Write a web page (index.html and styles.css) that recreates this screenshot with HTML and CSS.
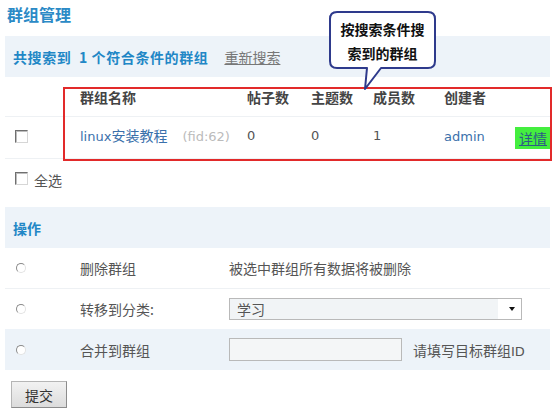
FILE: index.html
```html
<!DOCTYPE html>
<html lang="zh-CN">
<head>
<meta charset="utf-8">
<title>群组管理</title>
<link rel="stylesheet" href="styles.css">
</head>
<body>
<div class="title">群组管理</div>
<div class="wrap">
  <div class="band search">
    <span class="hl">共搜索到&nbsp;&nbsp;1 个符合条件的群组</span>
    <a class="resrch" href="#">重新搜索</a>
  </div>
  <div class="grid head">
    <span></span>
    <span>群组名称</span>
    <span>帖子数</span>
    <span>主题数</span>
    <span>成员数</span>
    <span>创建者</span>
    <span></span>
  </div>
  <div class="grid data">
    <span class="cbcell"><input type="checkbox" class="cb"></span>
    <span><a class="lnk" href="#"><span class="en">linux</span>安装教程</a><span class="fid en">(fid:62)</span></span>
    <span class="en">0</span>
    <span class="en">0</span>
    <span class="en">1</span>
    <span><a class="lnk en" href="#">admin</a></span>
    <span class="detcell"><a class="detail" href="#">详情</a></span>
  </div>
  <div class="selall"><input type="checkbox" class="cb"><span class="sellabel">全选</span></div>
  <div class="band ops">操作</div>
  <div class="op line">
    <span class="rc"><input type="radio" name="op" class="rd"></span>
    <span>删除群组</span>
    <span>被选中群组所有数据将被删除</span>
  </div>
  <div class="op short">
    <span class="rc"><input type="radio" name="op" class="rd"></span>
    <span>转移到分类:</span>
    <span class="selwrap"><select class="sel"><option>学习</option></select><span class="arrow"></span></span>
  </div>
  <div class="op alt">
    <span class="rc"><input type="radio" name="op" class="rd"></span>
    <span>合并到群组</span>
    <span class="mergecell"><input type="text" class="txt"><span class="hint">请填写目标群组<span class="en">ID</span></span></span>
  </div>
</div>
<div class="btnrow"><button class="btn" type="button">提交</button></div>

<div class="redbox"></div>
<div class="callout">
  <svg class="bubble" width="110" height="82" viewBox="0 0 110 82">
    <path d="M9 2 H100 Q107 2 107 9 V51 Q107 58 100 58 H53 L37 79 L39 58 H9 Q2 58 2 51 V9 Q2 2 9 2 Z" fill="#ffffff" stroke="#2e3a8c" stroke-width="2" stroke-linejoin="round"/>
  </svg>
  <div class="ctext">按搜索条件搜<br>索到的群组</div>
</div>
</body>
</html>
```

FILE: styles.css
```css
* { box-sizing: border-box; }

body {
  margin: 0;
  width: 554px;
  height: 409px;
  overflow: hidden;
  position: relative;
  background: #ffffff;
  font-family: "Noto Sans CJK SC", "DejaVu Sans", sans-serif;
  font-size: 14px;
  color: #555555;
}

.en { font-family: "DejaVu Sans", "Noto Sans CJK SC", sans-serif; font-size: 13px; }

.title {
  height: 36px;
  line-height: 28px;
  padding-left: 7px;
  font-size: 16px;
  font-weight: bold;
  color: #2b8ac6;
}

.wrap { margin: 0 4px 0 5px; }

.band {
  height: 41px;
  display: flex;
  align-items: center;
  padding-left: 8px;
  background: #edf3f9;
  color: #2287c6;
  font-weight: bold;
}

.search .hl { letter-spacing: 0.6px; }

.resrch {
  margin-left: 16px;
  font-weight: normal;
  color: #777777;
  text-decoration: underline;
}

.grid {
  display: grid;
  grid-template-columns: 75px 167px 64px 62px 71px 71px 1fr;
  align-items: center;
  border-bottom: 1px solid #eef1f4;
}

.head { height: 40px; font-weight: bold; color: #444444; }
.data { height: 42px; color: #555555; line-height: 20px; padding-bottom: 3px; }

.cbcell { padding-left: 10px; display: flex; align-items: center; }

.cb {
  -webkit-appearance: none;
  appearance: none;
  width: 13px;
  height: 13px;
  margin: 0;
  background: #ffffff;
  border: 1px solid;
  border-color: #6f6f6f #d6d6d6 #d6d6d6 #6f6f6f;
  box-shadow: inset 1px 1px 0 #bdbdbd;
}

.lnk { color: #3a70ab; text-decoration: none; }
.fid { color: #bbbbbb; margin-left: 15px; }

.detcell { white-space: nowrap; overflow: visible; }
.detail {
  display: inline-block;
  white-space: nowrap;
  background: #44ee3f;
  color: #2d5a86;
  text-decoration: underline;
  padding: 0 4px;
  line-height: 22px;
  margin-top: 3px;
}

.selall {
  height: 48px;
  display: flex;
  align-items: flex-start;
  padding: 13px 0 0 10px;
}
.sellabel { margin-left: 6px; line-height: 17px; }

.op {
  display: grid;
  grid-template-columns: 75px 149px 1fr;
  align-items: center;
  height: 41px;
}
.op.line { border-bottom: 1px solid #eef1f4; }
.op.short { height: 40px; }
.op.alt { background: #edf3f9; }

.rc { padding-left: 11px; display: flex; align-items: center; }

.rd {
  -webkit-appearance: none;
  appearance: none;
  width: 10px;
  height: 10px;
  margin: 0;
  border-radius: 50%;
  border: 1px solid;
  border-color: #8a8a8a #e2e2e2 #e2e2e2 #8a8a8a;
  background: #ffffff;
}

.selwrap { position: relative; display: block; width: 293px; height: 22px; }
.sel {
  -webkit-appearance: none;
  appearance: none;
  width: 293px;
  height: 22px;
  margin: 0;
  padding: 0 0 0 7px;
  border: 1px solid #b9b9b9;
  border-radius: 0;
  background: linear-gradient(to right, #f1f4f6 0%, #f1f4f6 92%, #ffffff 92%);
  font-family: "Noto Sans CJK SC", sans-serif;
  font-size: 14px;
  color: #555555;
}
.arrow {
  position: absolute;
  right: 7px;
  top: 9px;
  width: 0;
  height: 0;
  border-left: 3px solid transparent;
  border-right: 3px solid transparent;
  border-top: 4px solid #111111;
}

.mergecell { display: flex; align-items: center; }
.txt {
  width: 173px;
  height: 23px;
  margin: 0;
  border: 1px solid #b9b9b9;
  background: #f4f6f7;
}
.hint { margin-left: 11px; }

.btnrow { padding: 11px 0 0 11px; }
.btn {
  width: 56px;
  height: 27px;
  margin: 0;
  border: 1px solid;
  border-color: #b5b5b5 #8c8c8c #8c8c8c #b5b5b5;
  background: linear-gradient(#f2f2f2, #dcdcdc);
  font-family: "Noto Sans CJK SC", sans-serif;
  font-size: 14px;
  color: #333333;
  padding: 0;
}

.redbox {
  position: absolute;
  left: 63px;
  top: 87px;
  width: 489px;
  height: 74px;
  border: 2px solid #e22a2a;
}

.callout {
  position: absolute;
  left: 328px;
  top: 10px;
  width: 110px;
  height: 82px;
}
.bubble { position: absolute; left: 0; top: 0; }
.ctext {
  position: absolute;
  left: 2px;
  top: 7px;
  width: 105px;
  text-align: center;
  line-height: 24px;
  font-size: 14px;
  font-weight: bold;
  color: #111111;
}
```
